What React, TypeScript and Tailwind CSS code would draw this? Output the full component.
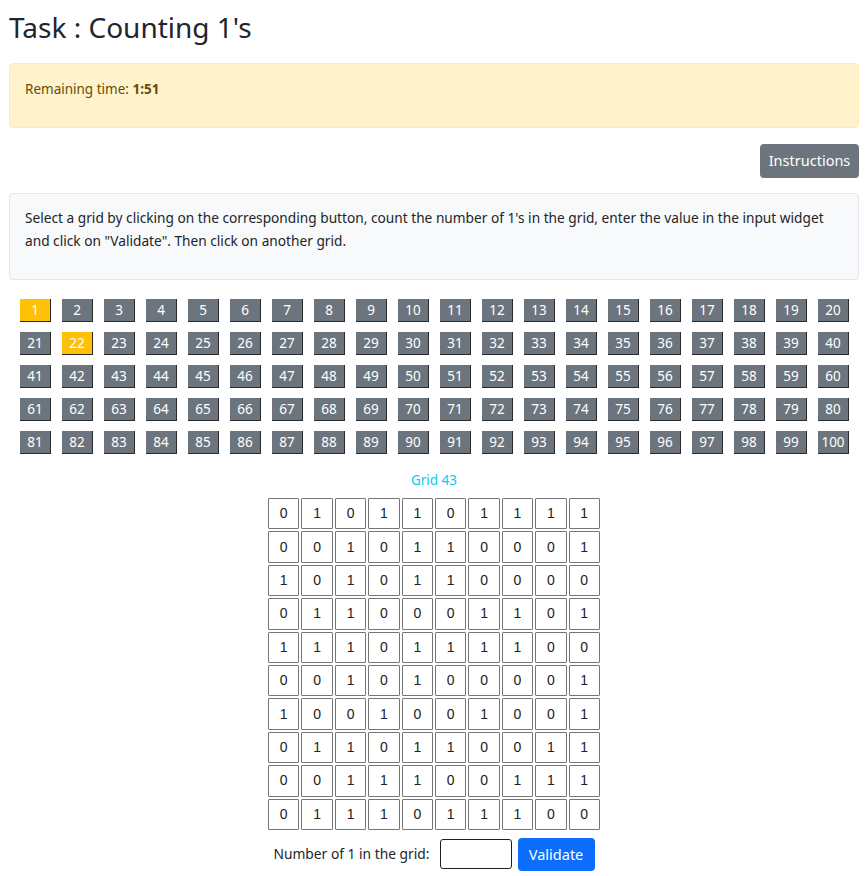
const grid = [
  '0101101111',
  '0010110001',
  '1010110000',
  '0110001101',
  '1110111100',
  '0010100001',
  '1001001001',
  '0110110011',
  '0011100111',
  '0111011100',
];

const selected = [1, 22];

export default function App() {
  const nums = Array.from({ length: 100 }, (_, i) => i + 1);

  return (
    <div className="min-h-[876px] bg-white px-[9px] text-[#212529] font-['Noto_Sans',sans-serif]">
      {/* Title */}
      <h1 className="pt-[6px] text-[28px] leading-[42px] font-normal">Task : Counting 1's</h1>

      {/* Timer */}
      <div className="mt-[15px] h-[65px] rounded-[4px] border border-[#ffecb5] bg-[#fff3cd] px-[15px] pt-[14px] text-[13.5px] leading-[22px] text-[#664d03]">
        Remaining time: <b className="font-bold">1:51</b>
      </div>

      <div className="mt-[16px] flex justify-end">
        <button className="h-[34px] w-[99px] rounded-[4px] bg-[#6c757d] text-[14.5px] text-white">
          Instructions
        </button>
      </div>

      {/* Instructions text */}
      <div className="mt-[15px] h-[87px] rounded-[4px] border border-[#e3e6ea] bg-[#f8f9fa] px-[15px] pt-[12px] text-[13.7px] leading-[23px]">
        Select a grid by clicking on the corresponding button, count the number of 1's in the grid, enter the value in the input widget
        and click on "Validate". Then click on another grid.
      </div>

      {/* Grid selector */}
      <div className="mt-[19px] grid grid-cols-[repeat(20,31px)] gap-x-[11px] gap-y-[10px] pl-[11px]">
        {nums.map((n) => (
          <button
            key={n}
            className={
              'h-[23px] w-[31px] border-b border-r border-[#2a2a2a] text-[13.5px] leading-[22px] text-white ' +
              (selected.includes(n) ? 'bg-[#ffc107]' : 'bg-[#6c757d]')
            }
          >
            {n}
          </button>
        ))}
      </div>

      {/* Selected grid */}
      <div className="mt-[16px] flex flex-col items-center">
        <div className="text-[13.5px] leading-[20px] text-[#0dcaf0]">Grid 43</div>
        <table className="mt-[6px] border-separate border-spacing-[2px] font-['Liberation_Sans',sans-serif] text-[14px] text-[#222]">
          <tbody>
            {grid.map((row, r) => (
              <tr key={r}>
                {row.split('').map((c, i) => (
                  <td key={i} className="h-[31.4px] w-[31.4px] rounded-[1px] border border-[#767676] p-0 text-center">
                    {c}
                  </td>
                ))}
              </tr>
            ))}
          </tbody>
        </table>

        <div className="mt-[6px] flex items-center">
          <span className="text-[13.8px]">Number of 1 in the grid:</span>
          <input className="ml-[10px] h-[30px] w-[72px] rounded-[3px] border border-[#1f1f1f] bg-white" />
          <button className="ml-[6px] h-[33px] w-[77px] rounded-[4px] bg-[#0d6efd] text-[14.5px] text-white">
            Validate
          </button>
        </div>
      </div>
    </div>
  );
}
